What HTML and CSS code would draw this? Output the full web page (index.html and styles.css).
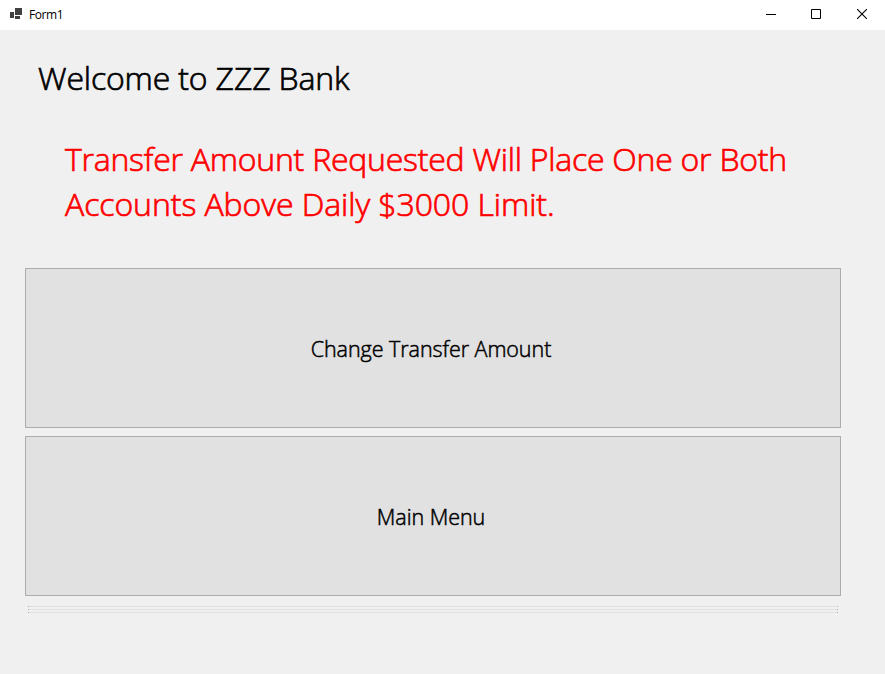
FILE: index.html
```html
<!DOCTYPE html>
<html lang="en">
<head>
<meta charset="utf-8">
<title>Form1</title>
<link rel="stylesheet" href="styles.css">
</head>
<body>
<header class="titlebar">
  <svg class="app-icon" width="14" height="12" viewBox="0 0 14 12" shape-rendering="crispEdges"><path fill="#404040" d="M1 4h4v6H1zM6 0h7v7H6zM6 8h5v3H6z"/></svg>
  <span class="title">Form1</span>
  <div class="controls">
    <button class="control" aria-label="Minimize"><svg width="10" height="10" viewBox="0 0 10 10"><path fill="#000" d="M0 5h10v1H0z"/></svg></button>
    <button class="control" aria-label="Maximize"><svg width="10" height="10" viewBox="0 0 10 10"><path fill="none" stroke="#000" d="M.5.5h9v9h-9z"/></svg></button>
    <button class="control" aria-label="Close"><svg width="10" height="10" viewBox="0 0 10 10"><path fill="none" stroke="#000" stroke-width="1.1" d="M0 0l10 10M10 0L0 10"/></svg></button>
  </div>
</header>
<main class="form">
  <h1 class="heading">Welcome to ZZZ Bank</h1>
  <p class="message"><span class="line">Transfer Amount Requested Will Place One or Both</span><span class="line last">Accounts Above Daily $3000 Limit.</span></p>
  <div class="actions">
    <button class="action">Change Transfer Amount</button>
    <button class="action">Main Menu</button>
  </div>
  <div class="collapsed"><i></i><i></i><i></i></div>
</main>
</body>
</html>
```
FILE: styles.css
```css
* { box-sizing: border-box; }
body {
  margin: 0;
  height: 674px;
  overflow: hidden;
  background: #f0f0f0;
  color: #000;
  font-family: "Open Sans", "Noto Sans", sans-serif;
}
.titlebar {
  display: flex;
  height: 30px;
  background: #fff;
}
.app-icon { margin: 8px 0 0 9px; }
.title {
  margin-left: 6px;
  font-size: 12px;
  line-height: 29px;
  letter-spacing: -0.4px;
}
.controls {
  display: flex;
  margin-left: auto;
}
.control {
  display: flex;
  width: 45px;
  height: 30px;
  padding: 9px 0 0 18px;
  border: 0;
  background: none;
}
.control + .control { width: 46px; }
.form { padding: 24px 44px 0 25px; }
.heading {
  margin: 0 0 0 13px;
  font-size: 32px;
  font-weight: 300;
  line-height: 48px;
  letter-spacing: -0.15px;
  white-space: nowrap;
  -webkit-text-stroke: 0.7px currentColor;
}
.message {
  margin: 34px 0 0 40px;
  color: #f00;
  font-size: 32px;
  font-weight: 300;
  line-height: 45px;
  white-space: nowrap;
  -webkit-text-stroke: 0.7px currentColor;
}
.line { display: block; letter-spacing: -0.24px; }
.last { letter-spacing: -0.07px; }
.actions {
  display: flex;
  flex-direction: column;
  gap: 8px;
  margin-top: 42px;
}
.action {
  height: 160px;
  padding: 2px 4px 0 0;
  border: 1px solid #adadad;
  background: #e1e1e1;
  color: #000;
  font: 300 21.5px/30px "Open Sans", "Noto Sans", sans-serif;
  letter-spacing: -0.05px;
  -webkit-text-stroke: 0.5px currentColor;
}
.collapsed {
  display: flex;
  flex-direction: column;
  gap: 2px;
  margin: 10px 3px 0 3px;
}
.collapsed i {
  height: 1px;
  border: solid #adadad;
  border-width: 0 1px;
  background: #e1e1e1;
}
```
